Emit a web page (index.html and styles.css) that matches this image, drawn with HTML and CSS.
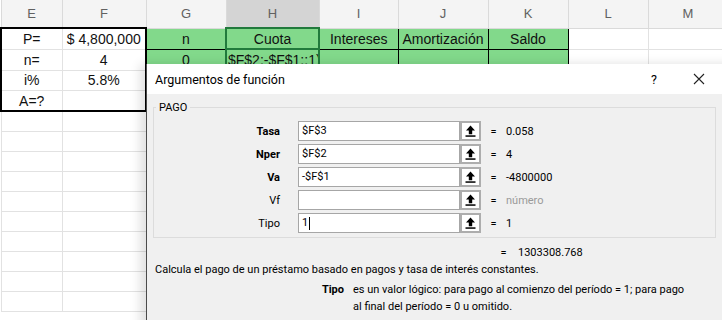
FILE: index.html
```html
<!DOCTYPE html>
<html lang="es">
<head>
    <meta charset="UTF-8">
    <meta name="viewport" content="width=device-width, initial-scale=1.0">
    <title>Argumentos de función</title>
    <link rel="stylesheet" href="styles.css">
</head>
<body>
    <table class="sheet">
        <colgroup>
            <col class="col-e"><col class="col-f"><col class="col-g"><col class="col-h"><col class="col-i">
            <col class="col-j"><col class="col-k"><col class="col-l"><col class="col-m">
        </colgroup>
        <thead>
            <tr>
                <th>E</th><th>F</th><th>G</th><th class="sel">H</th><th>I</th><th>J</th><th>K</th><th>L</th><th>M</th>
            </tr>
        </thead>
        <tbody>
            <tr>
                <td class="box-l box-t">P=</td>
                <td class="box-r box-t">$ 4,800,000</td>
                <td class="head">n</td>
                <td class="head active">Cuota</td>
                <td class="head">Intereses</td>
                <td class="head">Amortización</td>
                <td class="head">Saldo</td>
                <td></td><td></td>
            </tr>
            <tr>
                <td class="box-l">n=</td>
                <td class="box-r">4</td>
                <td class="head">0</td>
                <td class="head active edit">$F$2;-$F$1;;1)</td>
                <td class="head"></td>
                <td class="head"></td>
                <td class="head"></td>
                <td></td><td></td>
            </tr>
            <tr>
                <td class="box-l">i%</td>
                <td class="box-r">5.8%</td>
                <td></td><td></td><td></td><td></td><td></td><td></td><td></td>
            </tr>
            <tr>
                <td class="box-l box-b">A=?</td>
                <td class="box-r box-b"></td>
                <td></td><td></td><td></td><td></td><td></td><td></td><td></td>
            </tr>
            <tr><td></td><td></td><td></td><td></td><td></td><td></td><td></td><td></td><td></td></tr>
            <tr><td></td><td></td><td></td><td></td><td></td><td></td><td></td><td></td><td></td></tr>
            <tr><td></td><td></td><td></td><td></td><td></td><td></td><td></td><td></td><td></td></tr>
            <tr><td></td><td></td><td></td><td></td><td></td><td></td><td></td><td></td><td></td></tr>
            <tr><td></td><td></td><td></td><td></td><td></td><td></td><td></td><td></td><td></td></tr>
            <tr><td></td><td></td><td></td><td></td><td></td><td></td><td></td><td></td><td></td></tr>
            <tr><td></td><td></td><td></td><td></td><td></td><td></td><td></td><td></td><td></td></tr>
            <tr><td></td><td></td><td></td><td></td><td></td><td></td><td></td><td></td><td></td></tr>
            <tr><td></td><td></td><td></td><td></td><td></td><td></td><td></td><td></td><td></td></tr>
            <tr><td></td><td></td><td></td><td></td><td></td><td></td><td></td><td></td><td></td></tr>
        </tbody>
    </table>

    <div class="dialog">
        <div class="titlebar">
            <span class="title">Argumentos de función</span>
            <span class="help">?</span>
            <span class="close">
                <svg width="12" height="12" viewBox="0 0 12 12"><path d="M1 1L11 11M11 1L1 11" stroke="#222" stroke-width="1.1" fill="none"/></svg>
            </span>
        </div>
        <div class="dialog-body">
            <fieldset class="group">
                <legend>PAGO</legend>
                <div class="args">
                    <label class="arg-name req">Tasa</label>
                    <div class="field">$F$3</div>
                    <span class="pick"><svg width="11" height="12" viewBox="0 0 11 12"><path d="M5.5 0.5L1 5.5H3.8V9.3H7.2V5.5H10Z" fill="#000"/><rect x="0.5" y="10.3" width="10" height="1.5" fill="#000"/></svg></span>
                    <span class="eq">=</span>
                    <span class="val">0.058</span>

                    <label class="arg-name req">Nper</label>
                    <div class="field">$F$2</div>
                    <span class="pick"><svg width="11" height="12" viewBox="0 0 11 12"><path d="M5.5 0.5L1 5.5H3.8V9.3H7.2V5.5H10Z" fill="#000"/><rect x="0.5" y="10.3" width="10" height="1.5" fill="#000"/></svg></span>
                    <span class="eq">=</span>
                    <span class="val">4</span>

                    <label class="arg-name req">Va</label>
                    <div class="field">-$F$1</div>
                    <span class="pick"><svg width="11" height="12" viewBox="0 0 11 12"><path d="M5.5 0.5L1 5.5H3.8V9.3H7.2V5.5H10Z" fill="#000"/><rect x="0.5" y="10.3" width="10" height="1.5" fill="#000"/></svg></span>
                    <span class="eq">=</span>
                    <span class="val">-4800000</span>

                    <label class="arg-name">Vf</label>
                    <div class="field"></div>
                    <span class="pick"><svg width="11" height="12" viewBox="0 0 11 12"><path d="M5.5 0.5L1 5.5H3.8V9.3H7.2V5.5H10Z" fill="#000"/><rect x="0.5" y="10.3" width="10" height="1.5" fill="#000"/></svg></span>
                    <span class="eq">=</span>
                    <span class="val hint">número</span>

                    <label class="arg-name">Tipo</label>
                    <div class="field">1<span class="caret"></span></div>
                    <span class="pick"><svg width="11" height="12" viewBox="0 0 11 12"><path d="M5.5 0.5L1 5.5H3.8V9.3H7.2V5.5H10Z" fill="#000"/><rect x="0.5" y="10.3" width="10" height="1.5" fill="#000"/></svg></span>
                    <span class="eq">=</span>
                    <span class="val">1</span>
                </div>
            </fieldset>

            <div class="result">
                <span class="eq">=</span>
                <span class="val">1303308.768</span>
            </div>

            <p class="desc">Calcula el pago de un préstamo basado en pagos y tasa de interés constantes.</p>

            <div class="arg-help">
                <b>Tipo</b>
                <span>es un valor lógico: para pago al comienzo del período = 1; para pago al final del período = 0 u omitido.</span>
            </div>
        </div>
    </div>
</body>
</html>
```

FILE: styles.css
```css
body {
    margin: 0;
    width: 722px;
    height: 320px;
    overflow: hidden;
    position: relative;
    background-color: #fff;
    font-family: "Liberation Sans", Arial, sans-serif;
}

/* hoja de calculo */
.sheet {
    border-collapse: collapse;
    table-layout: fixed;
    width: 727px;
}
.col-e { width: 61px; }
.col-f { width: 84px; }
.col-g { width: 80px; }
.col-h { width: 93px; }
.col-i { width: 79px; }
.col-j { width: 90px; }
.col-k { width: 80px; }
.col-l { width: 80px; }
.col-m { width: 80px; }
.sheet th {
    height: 27px;
    padding: 0;
    background-color: #f4f4f4;
    color: #616161;
    font-weight: normal;
    font-size: 13px;
    border-left: 1px solid #dadada;
    border-right: 1px solid #dadada;
    border-bottom: 1px solid #dadada;
}
.sheet th.sel {
    background-color: #d4d4d4;
}
.sheet td {
    height: 19px;
    padding: 0 2px;
    border: 1px solid #e2e2e2;
    font-size: 14px;
    color: #111;
    text-align: center;
    white-space: nowrap;
    overflow: hidden;
}
.sheet td.box-l { border-left: 2px solid #000; }
.sheet td.box-r { border-right: 2px solid #000; }
.sheet td.box-t { border-top: 2px solid #000; }
.sheet td.box-b { border-bottom: 2px solid #000; }
.sheet td.head {
    background-color: #82d98b;
    border: 1px solid #000;
}
.sheet td.active {
    border: 2px solid #217a3c;
}
.sheet td.edit {
    text-align: left;
    padding-left: 1px;
    text-overflow: clip;
}

/* cuadro de dialogo */
.dialog {
    position: absolute;
    left: 146px;
    top: 64px;
    width: 600px;
    height: 280px;
    background-color: #f0f0f0;
    border-left: 1px solid #4a4a4a;
    box-shadow: -6px 0 10px rgba(0, 0, 0, 0.12);
    font-family: Roboto, "Liberation Sans", sans-serif;
    font-size: 11px;
    color: #000;
}
.titlebar {
    height: 30px;
    background-color: #fff;
    display: flex;
    align-items: center;
    padding-left: 8px;
}
.title {
    font-size: 12.5px;
    flex: 1;
}
.help {
    width: 20px;
    text-align: center;
    font-size: 12.5px;
}
.close {
    width: 20px;
    margin-left: 25px;
    margin-right: 38px;
    display: flex;
    justify-content: center;
}
.dialog-body {
    padding: 7px 0 0;
}
.group {
    margin: 0 8px 0 6px;
    padding: 7px 0 4px 1px;
    border: 1px solid #dcdcdc;
    width: 560px;
}
.group legend {
    padding: 0 3px;
    margin-left: 1px;
    font-size: 11px;
}
.args {
    display: grid;
    grid-template-columns: 134px 171px 21px 25px auto;
    grid-auto-rows: 20px;
    row-gap: 3px;
    align-items: center;
}
.arg-name {
    text-align: right;
    margin-right: 9px;
}
.arg-name.req {
    font-weight: bold;
}
.field {
    height: 18px;
    border: 1px solid #a6a6a6;
    background-color: #fff;
    line-height: 18px;
    padding-left: 3px;
    display: flex;
    align-items: center;
}
.args .field {
    margin-left: 9px;
}
.caret {
    display: inline-block;
    width: 1px;
    height: 13px;
    margin-left: 1px;
    background-color: #000;
}
.pick {
    height: 16px;
    border: 2px solid #adadad;
    background-color: #fff;
    display: flex;
    align-items: center;
    justify-content: center;
}
.eq {
    text-align: center;
}
.hint {
    color: #9a9a9a;
}
.result {
    display: grid;
    grid-template-columns: 25px auto;
    padding-left: 344px;
    margin-top: 6px;
    line-height: 17px;
}
.result .val {
    padding-left: 2px;
}
.desc {
    margin: 0;
    padding-left: 8px;
    line-height: 17px;
}
.arg-help {
    display: grid;
    grid-template-columns: 197px 335px;
    column-gap: 9px;
    margin-top: 3px;
    line-height: 17px;
}
.arg-help b {
    text-align: right;
}
```
